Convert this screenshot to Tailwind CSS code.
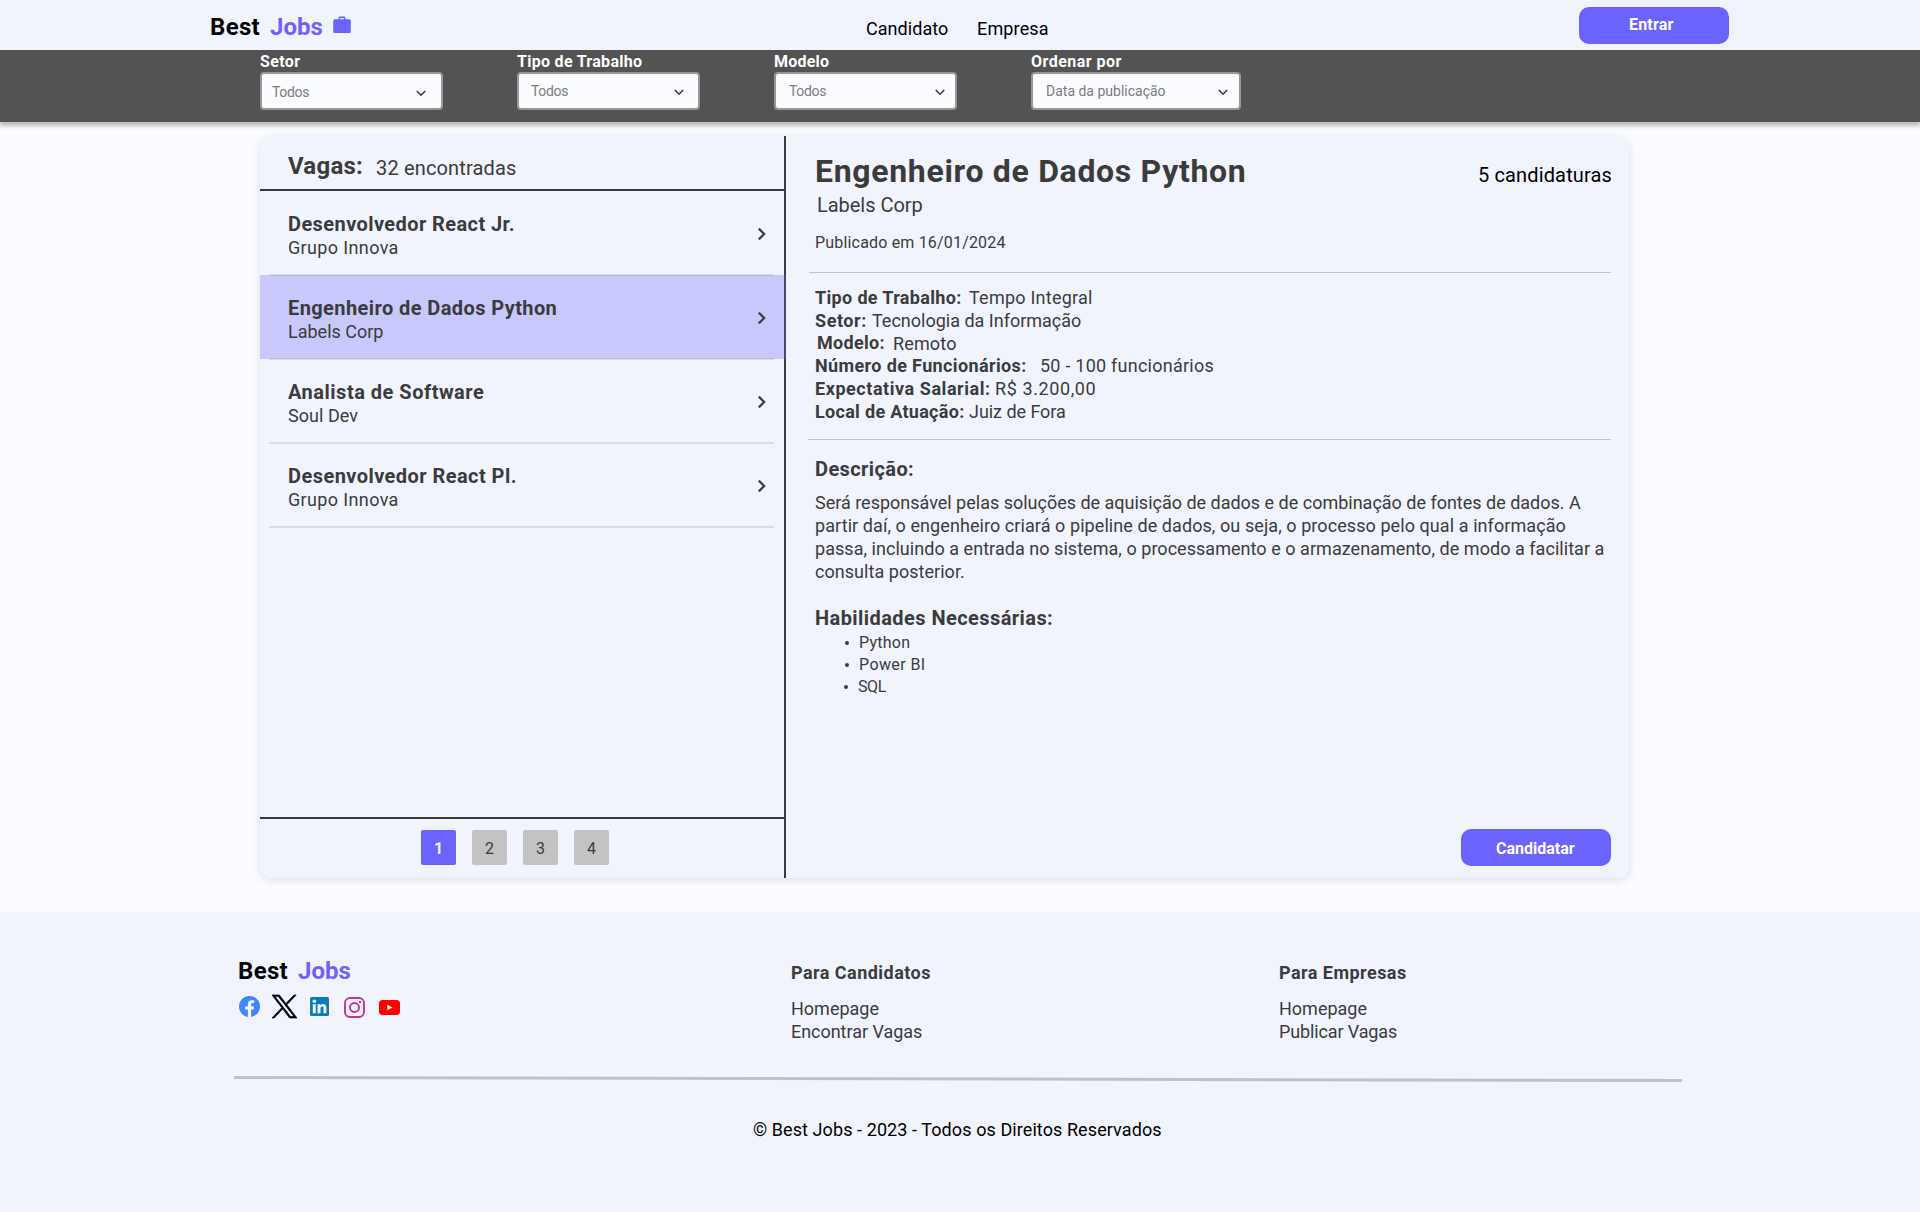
<!DOCTYPE html>
<html lang="pt-BR">
<head>
<meta charset="utf-8">
<title>Best Jobs</title>
<script src="https://cdn.jsdelivr.net/npm/@tailwindcss/browser@4"></script>
</head>
<body class="w-[1920px] h-[1212px] overflow-hidden bg-[#fbfcff] font-['Roboto',sans-serif] text-[#3b3b3b] flex flex-col">

<!-- Top navigation -->
<header class="h-[50px] shrink-0 bg-[#f1f4fd] flex items-start text-black">
  <div class="flex items-start pl-[210px] w-[866px]">
    <span class="mt-3 w-[60px] text-2xl leading-[30px] font-bold tracking-[0.33px]">Best</span>
    <span class="mt-3 w-[63px] text-2xl leading-[30px] font-bold text-[#6c63ff]">Jobs</span>
    <svg class="mt-4 size-[18px]" viewBox="0 0 18 18" fill="#6c63ff"><path fill-rule="evenodd" d="M5.6 3.2V1.6Q5.6.4 6.8.4h4.4q1.200 0 1.200 1.200v1.600h3.800q1.600 0 1.600 1.600v10.600q0 1.600-1.600 1.600H1.800q-1.600 0-1.600-1.600V4.800q0-1.600 1.600-1.600zM7.200 3.200h3.600V2H7.200z"/></svg>
  </div>
  <nav class="flex mt-[17px] text-lg leading-[23px] w-[713px]">
    <a class="w-[111px] tracking-[0.05px]">Candidato</a>
    <a class="tracking-[0.15px]">Empresa</a>
  </nav>
  <button class="mt-[7px] h-[37px] w-[150px] rounded-[10px] bg-[#6c63ff] flex items-start pl-[50px] pt-[7px] text-base leading-[21px] font-bold text-white tracking-[0.19px]">Entrar</button>
</header>

<!-- Filters -->
<section class="relative h-[72px] shrink-0 bg-[#535353] shadow-[0_4px_4px_rgba(0,0,0,0.25)] flex pl-[260px] pt-px">
  <div class="w-[257px]">
    <label class="block text-base leading-[21px] font-bold text-white tracking-[0.35px]">Setor</label>
    <div class="w-[183px] h-[38px] rounded-[4px] border-2 border-[#979797] bg-[#fbfcff] flex items-start justify-between pl-[10px] pr-[15px] pt-[9px]">
      <span class="text-sm leading-[18px] text-[#7c7c7c] tracking-[-0.35px]">Todos</span>
      <svg class="mt-[7px] w-[10px] h-[7px]" viewBox="0 0 10 7" fill="none" stroke="#3b3b3b" stroke-width="1.600"><path d="M.8 1 5 5.200 9.200 1"/></svg>
    </div>
  </div>
  <div class="w-[257px]">
    <label class="block text-base leading-[21px] font-bold text-white tracking-[0.29px]">Tipo de Trabalho</label>
    <div class="w-[183px] h-[38px] rounded-[4px] border-2 border-[#979797] bg-[#fbfcff] flex items-start justify-between pl-[12px] pr-[14px] pt-[8px]">
      <span class="text-sm leading-[18px] text-[#7c7c7c] tracking-[-0.35px]">Todos</span>
      <svg class="mt-[7px] w-[10px] h-[7px]" viewBox="0 0 10 7" fill="none" stroke="#3b3b3b" stroke-width="1.600"><path d="M.8 1 5 5.200 9.200 1"/></svg>
    </div>
  </div>
  <div class="w-[257px]">
    <label class="block text-base leading-[21px] font-bold text-white tracking-[0.22px]">Modelo</label>
    <div class="w-[183px] h-[38px] rounded-[4px] border-2 border-[#979797] bg-[#fbfcff] flex items-start justify-between pl-[13px] pr-[10px] pt-[8px]">
      <span class="text-sm leading-[18px] text-[#7c7c7c] tracking-[-0.35px]">Todos</span>
      <svg class="mt-[7px] w-[10px] h-[7px]" viewBox="0 0 10 7" fill="none" stroke="#3b3b3b" stroke-width="1.600"><path d="M.8 1 5 5.200 9.200 1"/></svg>
    </div>
  </div>
  <div class="w-[257px]">
    <label class="block text-base leading-[21px] font-bold text-white tracking-[0.48px]">Ordenar por</label>
    <div class="w-[210px] h-[38px] rounded-[4px] border-2 border-[#979797] bg-[#fbfcff] flex items-start justify-between pl-[13px] pr-[11px] pt-[8px]">
      <span class="text-sm leading-[18px] text-[#7c7c7c]">Data da publicação</span>
      <svg class="mt-[7px] w-[10px] h-[7px]" viewBox="0 0 10 7" fill="none" stroke="#3b3b3b" stroke-width="1.600"><path d="M.8 1 5 5.200 9.200 1"/></svg>
    </div>
  </div>
</section>

<!-- Job board -->
<main class="h-[790px] shrink-0 pt-[14px] pl-[260px]">
  <div class="w-[1369px] h-[742px] rounded-[10px] bg-[#f1f4fd] shadow-[0_2px_8px_rgba(0,0,0,0.12)] flex">

    <!-- Results list -->
    <section class="w-[526px] border-r-2 border-[#3b3b3b] flex flex-col">
      <div class="h-[55px] shrink-0 border-b-2 border-[#3b3b3b] pl-7 flex items-start">
        <h2 class="mt-[15px] w-[88px] text-2xl leading-[30px] font-bold tracking-[0.23px]">Vagas:</h2>
        <span class="mt-5 text-xl leading-6 tracking-[0.16px]">32 encontradas</span>
      </div>

      <div class="h-[83px] shrink-0 pl-[28px] pr-[17px] pt-[21px] flex justify-between">
        <div>
          <h3 class="text-xl leading-6 font-bold tracking-[0.41px]">Desenvolvedor React Jr.</h3>
          <p class="text-lg leading-[23px] tracking-[0.36px]">Grupo Innova</p>
        </div>
        <svg class="mt-[15px] w-[10px] h-[14px]" viewBox="0 0 10 14" fill="none" stroke="#3b3b3b" stroke-width="2.200"><path d="M1.800 1.600 7.200 7l-5.400 5.400"/></svg>
      </div>
      <hr class="h-[2px] shrink-0 border-0 bg-[#dadbe4] ml-[9px] mr-[10px]">

      <div class="relative h-[82px] shrink-0 pl-[28px] pr-[17px] pt-[20px] flex justify-between">
        <div class="absolute -top-px left-0 -right-[2px] h-[84px] bg-[#6c63ff]/30"></div>
        <div class="relative">
          <h3 class="text-xl leading-6 font-bold tracking-[0.41px]">Engenheiro de Dados Python</h3>
          <p class="text-lg leading-[23px]">Labels Corp</p>
        </div>
        <svg class="relative mt-[15px] w-[10px] h-[14px]" viewBox="0 0 10 14" fill="none" stroke="#3b3b3b" stroke-width="2.200"><path d="M1.800 1.600 7.200 7l-5.400 5.400"/></svg>
      </div>
      <hr class="h-[2px] shrink-0 border-0 bg-[#dadbe4] ml-[9px] mr-[10px]">

      <div class="h-[82px] shrink-0 pl-[28px] pr-[17px] pt-[20px] flex justify-between">
        <div>
          <h3 class="text-xl leading-6 font-bold tracking-[0.5px]">Analista de Software</h3>
          <p class="text-lg leading-[23px] tracking-[0.04px]">Soul Dev</p>
        </div>
        <svg class="mt-[15px] w-[10px] h-[14px]" viewBox="0 0 10 14" fill="none" stroke="#3b3b3b" stroke-width="2.200"><path d="M1.800 1.600 7.200 7l-5.400 5.400"/></svg>
      </div>
      <hr class="h-[2px] shrink-0 border-0 bg-[#dadbe4] ml-[9px] mr-[10px]">

      <div class="h-[82px] shrink-0 pl-[28px] pr-[17px] pt-[20px] flex justify-between">
        <div>
          <h3 class="text-xl leading-6 font-bold tracking-[0.44px]">Desenvolvedor React Pl.</h3>
          <p class="text-lg leading-[23px] tracking-[0.36px]">Grupo Innova</p>
        </div>
        <svg class="mt-[15px] w-[10px] h-[14px]" viewBox="0 0 10 14" fill="none" stroke="#3b3b3b" stroke-width="2.200"><path d="M1.800 1.600 7.200 7l-5.400 5.400"/></svg>
      </div>
      <hr class="h-[2px] shrink-0 border-0 bg-[#dadbe4] ml-[9px] mr-[10px]">

      <nav class="mt-auto h-[61px] shrink-0 border-t-2 border-[#3b3b3b] pt-[11px] pl-[161px] flex gap-4 text-base leading-[21px] text-center">
        <a class="size-[35px] rounded-[2px] pt-2 bg-[#6c63ff] text-[#f1f4fd] font-bold">1</a>
        <a class="size-[35px] rounded-[2px] pt-2 bg-[#c3c3c3]">2</a>
        <a class="size-[35px] rounded-[2px] pt-2 bg-[#c3c3c3]">3</a>
        <a class="size-[35px] rounded-[2px] pt-2 bg-[#c3c3c3]">4</a>
      </nav>
    </section>

    <!-- Job details -->
    <article class="flex-1 pl-[29px] pr-[18px] pb-3 flex flex-col">
      <div class="flex justify-between items-start">
        <h1 class="mt-[14px] text-[32px] leading-[42px] font-bold tracking-[0.68px] whitespace-nowrap">Engenheiro de Dados Python</h1>
        <span class="mt-[27px] -mr-px text-xl leading-6 text-black tracking-[0.14px]">5 candidaturas</span>
      </div>
      <p class="mt-px ml-[2px] text-xl leading-6 tracking-[-0.03px]">Labels Corp</p>
      <p class="mt-[15px] text-base leading-[21px] tracking-[0.18px]">Publicado em 16/01/2024</p>
      <hr class="mt-[19px] -ml-[6px] h-px border-0 bg-[#c3c3c6]">

      <dl class="mt-[13px] text-lg leading-[23px] whitespace-nowrap">
        <div class="flex"><dt class="w-[154px] font-bold tracking-[0.34px]">Tipo de Trabalho:</dt><dd class="tracking-[0.24px]">Tempo Integral</dd></div>
        <div class="flex"><dt class="w-[57px] font-bold tracking-[0.55px]">Setor:</dt><dd>Tecnologia da Informação</dd></div>
        <div class="flex h-[22px]"><dt class="ml-[2px] -mt-px w-[76px] font-bold tracking-[0.3px]">Modelo:</dt><dd class="tracking-[0.15px]">Remoto</dd></div>
        <div class="flex"><dt class="w-[225px] font-bold tracking-[0.37px]">Número de Funcionários:</dt><dd class="tracking-[0.24px]">50 - 100 funcionários</dd></div>
        <div class="flex"><dt class="w-[180px] font-bold tracking-[0.55px]">Expectativa Salarial:</dt><dd class="tracking-[0.6px]">R$ 3.200,00</dd></div>
        <div class="flex"><dt class="w-[154px] font-bold tracking-[0.3px]">Local de Atuação:</dt><dd class="tracking-[-0.05px]">Juiz de Fora</dd></div>
      </dl>
      <hr class="mt-[16px] -ml-[7px] h-px border-0 bg-[#c3c3c6]">

      <h2 class="mt-[17px] text-xl leading-6 font-bold tracking-[0.4px]">Descrição:</h2>
      <p class="mt-[10px] text-lg leading-[23px] whitespace-nowrap">
        <span class="block tracking-[-0.008px]">Será responsável pelas soluções de aquisição de dados e de combinação de fontes de dados. A</span>
        <span class="block tracking-[0.075px]">partir daí, o engenheiro criará o pipeline de dados, ou seja, o processo pelo qual a informação</span>
        <span class="block tracking-[0.043px]">passa, incluindo a entrada no sistema, o processamento e o armazenamento, de modo a facilitar a</span>
        <span class="block tracking-[0.043px]">consulta posterior.</span>
      </p>

      <h2 class="mt-[23px] text-xl leading-6 font-bold tracking-[0.43px]">Habilidades Necessárias:</h2>
      <ul class="mt-[2px] pl-[30px] text-base leading-[22px]">
        <li class="flex items-center gap-[10px] tracking-[0.25px]"><span class="size-1 rounded-full bg-[#3b3b3b]"></span>Python</li>
        <li class="flex items-center gap-[10px] tracking-[0.4px]"><span class="size-1 rounded-full bg-[#3b3b3b]"></span>Power BI</li>
        <li class="flex items-center gap-[10px] -ml-px tracking-[-0.4px]"><span class="size-1 rounded-full bg-[#3b3b3b]"></span>SQL</li>
      </ul>

      <button class="mt-auto self-end h-[37px] w-[150px] rounded-[10px] bg-[#6c63ff] flex items-start pl-[35px] pt-[9px] text-base leading-[21px] font-bold text-white">Candidatar</button>
    </article>
  </div>
</main>

<!-- Footer -->
<footer class="h-[300px] shrink-0 bg-[#f1f4fd] pt-[44px]">
  <div class="flex h-[119px] pl-[238px]">
    <div class="w-[553px]">
      <div class="flex text-2xl leading-[30px] font-bold">
        <span class="w-[60px] text-black tracking-[0.33px]">Best</span>
        <span class="text-[#6c63ff]">Jobs</span>
      </div>
      <div class="flex items-start mt-[9px] pl-px">
        <svg class="mt-px w-[21px] h-[21px]" viewBox="0 0 24 24"><circle cx="12" cy="12" r="11.500" fill="#f1f4fd"/><path fill="#4086ff" d="M24 12.070C24 5.400 18.630 0 12 0S0 5.400 0 12.070C0 18.100 4.390 23.100 10.130 24v-8.440H7.080v-3.490h3.050V9.410c0-3.020 1.790-4.690 4.530-4.690 1.310 0 2.690.24 2.690.24v2.970h-1.510c-1.490 0-1.960.93-1.960 1.890v2.260h3.330l-.53 3.490h-2.800V24C19.610 23.100 24 18.100 24 12.070z"/></svg>
        <svg class="ml-[12px] w-[25px] h-[23px] overflow-visible" viewBox="0 0 1200 1227" preserveAspectRatio="none" fill="#000" stroke="#000" stroke-width="36"><path d="M714.163 519.284 1160.890 0H1055.030L667.137 450.887 357.328 0H0L468.492 681.821 0 1226.370H105.866L515.491 750.218 842.672 1226.370H1200L714.137 519.284H714.163ZM569.165 687.828 521.697 619.934 144.011 79.694H306.615L611.412 515.685 658.880 583.579 1055.080 1150.300H892.476L569.165 687.854V687.828Z"/></svg>
        <svg class="ml-[13px] mt-[2px] size-[19px]" viewBox="0 0 19 19"><rect width="19" height="19" rx="1.600" fill="#0a7cba"/><g fill="#f1f4fd"><circle cx="4.300" cy="4.300" r="1.750"/><path d="M2.800 7.200h3v9h-3zM7.500 7.200h2.800v1.200c.5-.9 1.500-1.450 2.700-1.450 2.800 0 3.400 1.800 3.400 4.200v5.050h-3v-4.500c0-1.100 0-2.300-1.300-2.300s-1.600 1.050-1.600 2.200v4.600h-3z"/></g></svg>
        <svg class="ml-[15px] mt-[2px] size-[21px]" viewBox="0 0 21 21" fill="none" stroke="#c13593" stroke-width="1.900"><rect x="1" y="1" width="19" height="19" rx="5"/><circle cx="10.500" cy="10.500" r="4.500"/><circle cx="16" cy="5" r="1.200" fill="#c13593" stroke="none"/></svg>
        <svg class="ml-[14px] mt-[5px] w-[21px] h-[15px]" viewBox="0 0 21 15"><rect width="21" height="15" rx="3.500" fill="#ff0000"/><path d="M8.200 4.700v5.600l5.400-2.800z" fill="#fff"/></svg>
      </div>
    </div>
    <div class="w-[488px] text-lg leading-[23px]">
      <h4 class="mt-[5px] font-bold tracking-[0.46px]">Para Candidatos</h4>
      <p class="mt-[13px]">Homepage</p>
      <p class="tracking-[-0.04px]">Encontrar Vagas</p>
    </div>
    <div class="text-lg leading-[23px]">
      <h4 class="mt-[5px] font-bold tracking-[0.46px]">Para Empresas</h4>
      <p class="mt-[13px]">Homepage</p>
      <p class="tracking-[-0.13px]">Publicar Vagas</p>
    </div>
  </div>
  <svg class="ml-[234px] w-[1448px] h-[8px]" viewBox="0 0 1448 8"><path d="M0 2.500 1448 5.500" stroke="#c1c1c1" stroke-width="3"/></svg>
  <p class="mt-[35px] pl-[753px] text-lg leading-[23px] text-black tracking-[0.085px]">© Best Jobs - 2023 - Todos os Direitos Reservados</p>
</footer>
</body>
</html>
